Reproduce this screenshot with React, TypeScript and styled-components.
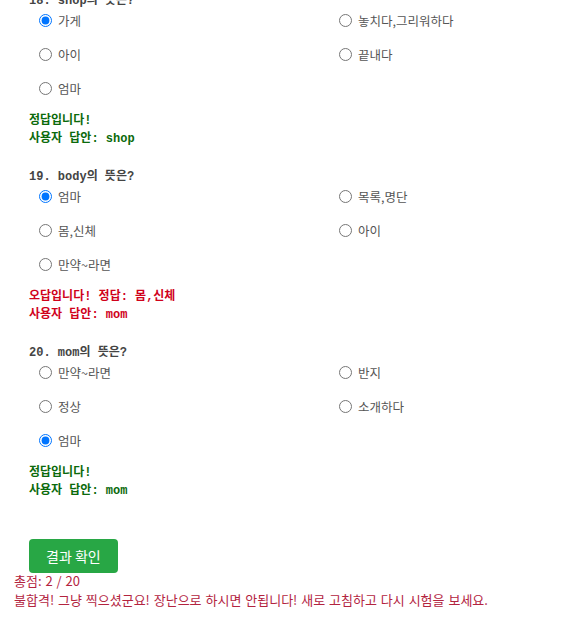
import styled, { createGlobalStyle } from 'styled-components';

interface Question {
  no: number;
  word: string;
  options: string[];
  picked: number;
  answer: number;
}

const questions: Question[] = [
  { no: 18, word: 'shop', options: ['가게', '놓치다,그리워하다', '아이', '끝내다', '엄마'], picked: 0, answer: 0 },
  { no: 19, word: 'body', options: ['엄마', '목록,명단', '몸,신체', '아이', '만약~라면'], picked: 0, answer: 2 },
  { no: 20, word: 'mom', options: ['만약~라면', '반지', '정상', '소개하다', '엄마'], picked: 4, answer: 4 },
];

const GlobalStyle = createGlobalStyle`
  body {
    margin: 0;
    background: #fff;
    font-family: "Noto Sans CJK KR", "Noto Sans", sans-serif;
  }
`;

const App = () => {
  return (
    <>
      <GlobalStyle />
      <PageS>
        <QuizListS>
          {questions.map((q) => (
            <QuestionBox key={q.no} question={q} />
          ))}
        </QuizListS>
        <SubmitButtonS type='button'>결과 확인</SubmitButtonS>
        <ScoreBoxS>
          <p>총점: 2 / 20</p>
          <p>불합격! 그냥 찍으셨군요! 장난으로 하시면 안됩니다! 새로 고침하고 다시 시험을 보세요.</p>
        </ScoreBoxS>
      </PageS>
    </>
  );
};

export default App;

// 문제 하나 (제목, 보기, 채점 결과)
const QuestionBox = ({ question }: { question: Question }) => {
  const { no, word, options, picked, answer } = question;
  const isCorrect = picked === answer;
  const userAnswer = options[picked] === '엄마' ? 'mom' : word;

  return (
    <QuestionS>
      <TitleS>
        {no}. {word}의 뜻은?
      </TitleS>
      <OptionGridS>
        {options.map((opt, i) => (
          <OptionS key={opt + i}>
            <input type='radio' name={`q${no}`} checked={i === picked} readOnly />
            <span>{opt}</span>
          </OptionS>
        ))}
      </OptionGridS>
      <ResultBoxS>
        <ResultS correct={isCorrect}>
          {isCorrect ? '정답입니다!' : `오답입니다! 정답: ${options[answer]}`}
        </ResultS>
        <ResultS correct={isCorrect}>사용자 답안: {no === 18 ? 'shop' : userAnswer}</ResultS>
      </ResultBoxS>
    </QuestionS>
  );
};

const PageS = styled.div`
  padding-left: 14px;
  margin-top: -8px;
`;

const QuizListS = styled.div`
  display: flex;
  flex-direction: column;
  gap: 20px;
  margin-left: 15px;
`;

const QuestionS = styled.div`
  display: flex;
  flex-direction: column;
`;

const TitleS = styled.h3`
  margin: 0 0 -2px;
  font-family: 'Liberation Mono', 'Noto Sans CJK KR', monospace;
  font-size: 12px;
  font-weight: bold;
  line-height: 18px;
  color: #444;
`;

const OptionGridS = styled.div`
  display: grid;
  grid-template-columns: 300px 1fr;
  padding-left: 5px;
`;

const OptionS = styled.label`
  display: flex;
  align-items: center;
  height: 24px;
  margin-bottom: 10px;
  font-size: 12.5px;
  color: #555;

  input {
    width: 13px;
    height: 13px;
    margin: 0 6px 0 5px;
  }
`;

const ResultBoxS = styled.div`
  margin-top: 2px;
`;

const ResultS = styled.div<{ correct: boolean }>`
  font-family: 'Liberation Mono', 'Noto Sans CJK KR', monospace;
  font-size: 12px;
  font-weight: bold;
  line-height: 18px;
  color: ${(props) => (props.correct ? '#0b6a0b' : '#d0021b')};
`;

const SubmitButtonS = styled.button`
  display: block;
  margin: 39px 0 0 15px;
  height: 34px;
  padding: 0 17px;
  border: none;
  border-radius: 4px;
  background-color: #28a745;
  color: #fff;
  font-family: 'Noto Sans CJK KR', sans-serif;
  font-size: 14px;
`;

const ScoreBoxS = styled.div`
  margin-top: -2px;

  p {
    margin: 0;
    font-size: 13px;
    line-height: 19px;
    word-spacing: 1px;
    color: #b3243f;
  }
`;
